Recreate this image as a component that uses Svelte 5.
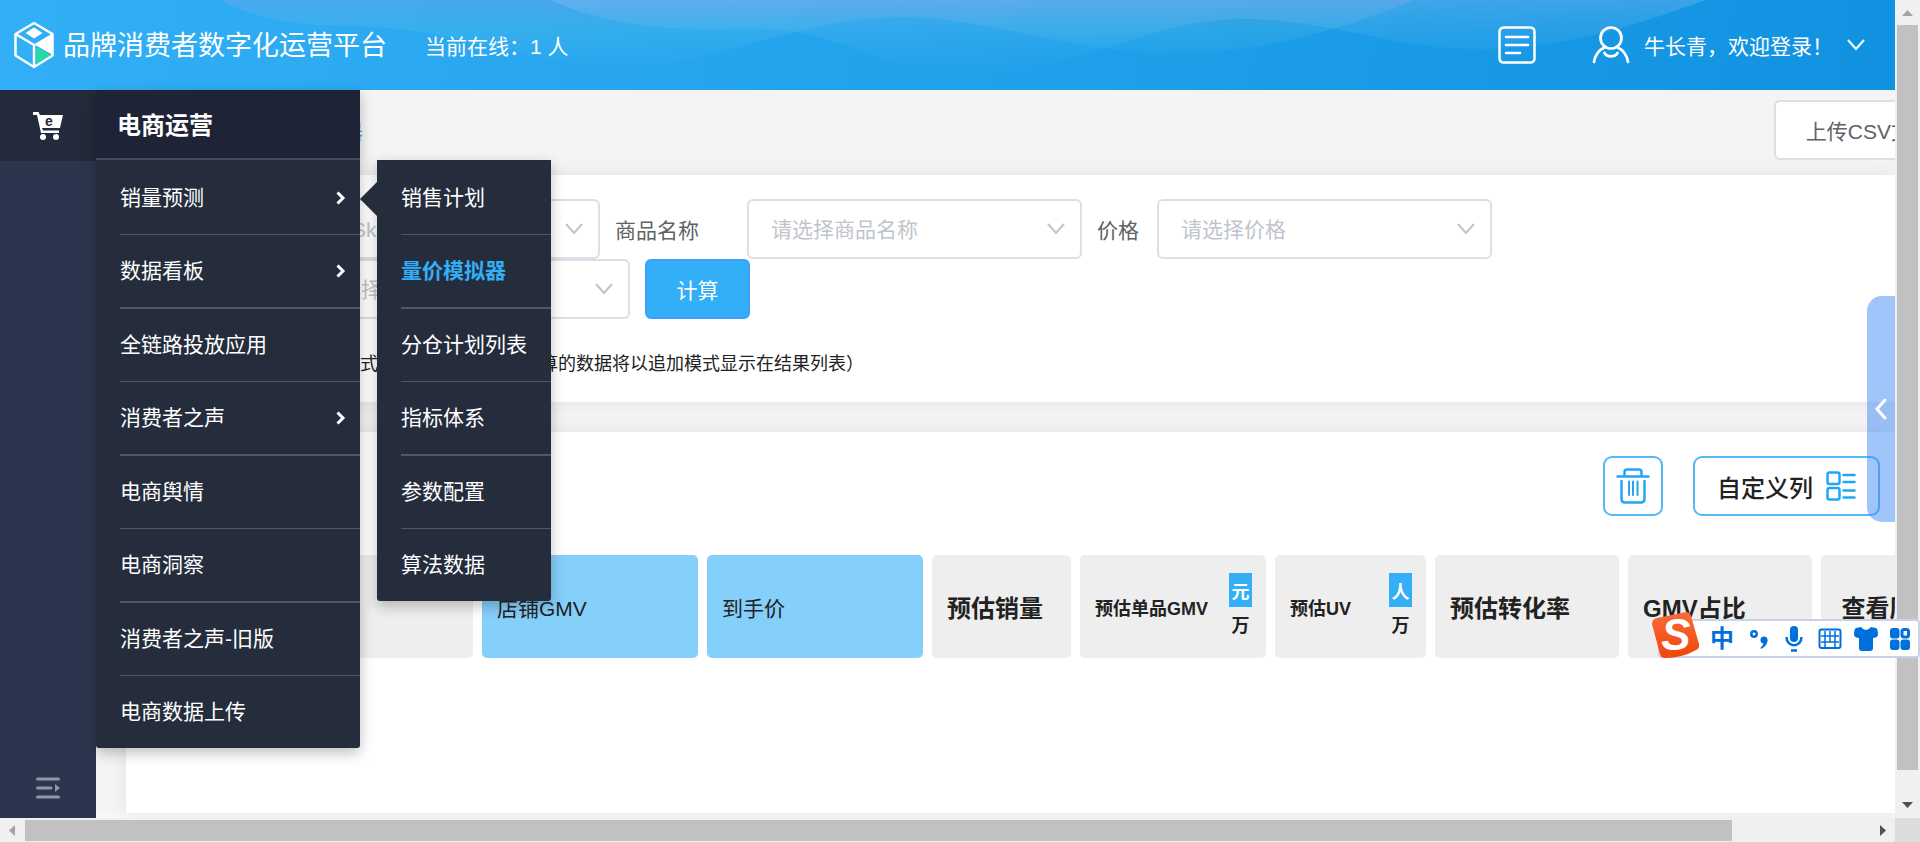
<div class="window">
  <div class="viewport">
    <!-- Header -->
    <header class="topbar">
      <svg class="waves" viewBox="0 0 1895 90" preserveAspectRatio="none" aria-hidden="true">
        <defs>
          <linearGradient id="wave" x1="0" y1="0" x2="0" y2="75" gradientUnits="userSpaceOnUse">
            <stop offset="0" stop-color="#c2a0dc" stop-opacity="0.2" />
            <stop offset="0.4" stop-color="#78d2dc" stop-opacity="0.16" />
            <stop offset="1" stop-color="#50c8ff" stop-opacity="0" />
          </linearGradient>
          <linearGradient id="wave-light" x1="0" y1="0" x2="0" y2="75" gradientUnits="userSpaceOnUse">
            <stop offset="0" stop-color="#a8c8f0" stop-opacity="0.26" />
            <stop offset="1" stop-color="#50c8ff" stop-opacity="0" />
          </linearGradient>
        </defs>
        <path fill="url(#wave)" d="M220 0C255 19 300 26 350 26C460 27 520 66 620 66C720 66 800 17 900 17C990 17 1070 53 1170 53C1270 52 1340 30 1415 0Z" />
        <path fill="url(#wave-light)" d="M550 0C590 18 640 29 700 29C750 29 775 27 800 33C860 46 900 73 970 73C1080 73 1150 19 1240 19C1330 19 1390 49 1480 49C1560 49 1630 28 1705 0Z" />
      </svg>
      <div class="brand">
        <svg width="42" height="48" viewBox="0 0 42 48" fill="none" aria-hidden="true">
          <path d="M21 2L39.500 13V34.500L21 46L2.500 34.500V13Z" stroke="#fff" stroke-width="2.500" stroke-linejoin="round" />
          <path d="M2.500 13L21 24V46" stroke="#fff" stroke-width="2.500" />
          <path d="M20 24L40 12V34L23 24.500Z" fill="#fff" />
          <path d="M21 6.500L29.500 12L21 17.500L12.500 12Z" fill="#fff" />
          <path d="M23 26L37.500 34L23 43.500Z" fill="#25dba6" />
        </svg>
        <h1>品牌消费者数字化运营平台</h1>
      </div>
      <span class="online">当前在线：1 人</span>
      <button class="icon-button" aria-label="消息">
        <svg width="38" height="38" viewBox="0 0 38 38" fill="none" stroke="#fff" stroke-width="2.500" stroke-linecap="round">
          <rect x="1.500" y="1.500" width="35" height="35" rx="4" />
          <path d="M8 11H30M8 19H30M8 27H22" />
        </svg>
      </button>
      <button class="user">
        <svg width="38" height="38" viewBox="0 0 38 38" fill="none" stroke="#fff" stroke-width="2.700" stroke-linecap="round">
          <circle cx="19" cy="12" r="10.500" />
          <path d="M2 36C3 29 7 24 13 21M36 36C35 29 31 24 25 21M12.500 27C15 31.500 23 31.500 25.500 27" />
        </svg>
        <span>牛长青，欢迎登录！</span>
        <svg width="18" height="12" viewBox="0 0 18 12" fill="none" stroke="#fff" stroke-width="2">
          <path d="M1 1L9 10L17 1" />
        </svg>
      </button>
    </header>

    <div class="body">
      <!-- Sidebar -->
      <aside class="sidebar">
        <button class="side-item" aria-label="电商运营">
          <svg width="30" height="30" viewBox="0 0 30 30" aria-hidden="true">
            <path d="M0 1H5.500L7 4H30L27 17H9L10 19.500H26V22H8L4 4H0Z" fill="#fff" />
            <circle cx="10" cy="26" r="3" fill="#fff" />
            <circle cx="23" cy="26" r="3" fill="#fff" />
            <text x="12" y="15" class="cart-letter">e</text>
          </svg>
        </button>
        <button class="collapse" aria-label="展开菜单">
          <svg width="24" height="24" viewBox="0 0 24 24" fill="none" stroke="#8e97a8" stroke-width="3" stroke-linecap="round">
            <path d="M1.500 3H22.500M1.500 12H15M1.500 21H22.500" />
            <path d="M19 8L24 12L19 16Z" fill="#8e97a8" stroke="none" />
          </svg>
        </button>
      </aside>

      <main class="main">
        <div class="crumb-row">
          <div class="crumbs">
            <span>销量预测</span>
            <span>/</span>
            <a href="#simulator">量价模拟器</a>
          </div>
          <button class="upload">上传CSV文件</button>
        </div>

        <!-- Filters -->
        <section class="card filters">
          <div class="filter-row">
            {#each filters as filter}
              {@render field(filter)}
            {/each}
          </div>
          <div class="filter-row">
            {@render field(activity)}
            <button class="submit">计算</button>
          </div>
          <label class="append">
            <input type="checkbox" bind:checked={append} />
            <span>启用计算结果追加模式（勾选后，每一次计算的数据将以追加模式显示在结果列表）</span>
          </label>
        </section>

        <!-- Result list -->
        <section class="card results">
          <div class="tools">
            <button class="tool trash" aria-label="删除">
              <svg width="34" height="36" viewBox="0 0 34 36" fill="none" stroke="#23a5f5" stroke-width="2.500" stroke-linecap="round" stroke-linejoin="round">
                <path d="M1.500 8.500H32.500M8.500 8V4Q8.500 1.500 11 1.500H23Q25.500 1.500 25.500 4V8M5.500 13V31Q5.500 34.500 9 34.500H25Q28.500 34.500 28.500 31V13" />
                <path d="M13 13.500V27M17 13.500V27M21.500 13.500V27" stroke-width="2" />
              </svg>
            </button>
            <button class="tool">
              <span>自定义列</span>
              <svg width="30" height="30" viewBox="0 0 30 30" fill="none" stroke="#23a5f5" stroke-width="2.500" stroke-linecap="round">
                <rect x="1.500" y="1.500" width="12" height="11.500" rx="2" />
                <rect x="1.500" y="17" width="12" height="11.500" rx="2" />
                <path d="M17.500 4H28.500M17.500 11H28.500M17.500 19.500H28.500M17.500 26.500H28.500" />
              </svg>
            </button>
          </div>
          <table class="result-table">
            <thead>
              <tr>
                {#each columns as col}
                  <th class={col.kind} style="width: {col.width}px">
                    <div class="cell">
                      <span>{col.title}</span>
                      {#if col.units}
                        <span class="units">
                          {#each col.units as unit, i}
                            <button class:on={i === 0}>{unit}</button>
                          {/each}
                        </span>
                      {/if}
                    </div>
                  </th>
                {/each}
              </tr>
            </thead>
          </table>
        </section>
      </main>
    </div>

    <!-- Flyout menu -->
    <nav class="flyout">
      <h2>电商运营</h2>
      <ul>
        {#each menu as item}
          <li>
            <a href="#menu">{item.name}</a>
            {#if item.children}
              <svg width="10" height="14" viewBox="0 0 10 14" fill="none" stroke="#fff" stroke-width="3">
                <path d="M1.500 1.500L7 7L1.500 12.500" />
              </svg>
            {/if}
          </li>
        {/each}
      </ul>
    </nav>
    <nav class="flyout submenu">
      <ul>
        {#each submenu as name}
          <li class:active={name === current}><a href="#submenu">{name}</a></li>
        {/each}
      </ul>
    </nav>

    <button class="drawer" aria-label="展开">
      <svg width="14" height="24" viewBox="0 0 14 24" fill="none" stroke="#fff" stroke-width="3" stroke-linecap="round">
        <path d="M11 3L3 12L11 21" />
      </svg>
    </button>
  </div>

  <!-- Scrollbars -->
  <div class="bar vertical">
    <i class="arrow up"></i>
    <div class="track"><div class="thumb" style="height: {scrollY}%"></div></div>
    <i class="arrow down"></i>
  </div>
  <div class="bar horizontal">
    <i class="arrow left"></i>
    <div class="track"><div class="thumb" style="width: {scrollX}%"></div></div>
    <i class="arrow right"></i>
  </div>
  <div class="corner"></div>

  <!-- Input method toolbar -->
  <div class="ime">
    <svg class="ime-logo" width="48" height="46" viewBox="0 0 48 46" aria-hidden="true">
      <defs>
        <linearGradient id="ime" x1="0" y1="0" x2="0" y2="1">
          <stop offset="0" stop-color="#fb6a3a" />
          <stop offset="1" stop-color="#ee4708" />
        </linearGradient>
      </defs>
      <path fill="url(#ime)" d="M5 6L34 0Q38 0 39 4L47 32Q48 36 44 38Q30 46 13 46Q9 46 8 42L0 12Q0 7 5 6Z" />
      <text x="24" y="38" class="ime-letter">S</text>
    </svg>
    <span class="lang">中</span>
    <svg width="24" height="24" viewBox="0 0 24 24" fill="#0070dc">
      <circle cx="8" cy="7" r="2.700" fill="none" stroke="#0070dc" stroke-width="2.500" />
      <circle cx="18" cy="13" r="3.500" />
      <path d="M21.500 13Q21.500 19 15 22L14.500 20.500Q17.500 18.500 17.500 15Z" />
    </svg>
    <svg width="24" height="26" viewBox="0 0 24 26" fill="none" stroke="#0070dc" stroke-width="2.500">
      <rect x="8" y="0" width="8" height="16" rx="4" fill="#0070dc" stroke="none" />
      <path d="M4.500 11C4.500 22 19.500 22 19.500 11M9 24.500H15" />
    </svg>
    <svg width="24" height="24" viewBox="0 0 24 24" fill="none" stroke="#0070dc" stroke-width="1.500">
      <rect x="1.500" y="2.500" width="21" height="18.500" rx="2" stroke-width="2" />
      <path d="M3 9H21M3 15H21M7 4V20M12 4V15M17 4V20" />
    </svg>
    <svg width="24" height="24" viewBox="0 0 24 24" fill="#0070dc">
      <path d="M7 0Q12 6 17 0L22 1Q24 2 24 8Q23 11 19 11V21Q19 24 16 24H8Q5 24 5 21V11Q1 11 0 8Q0 2 2 1Z" />
    </svg>
    <svg width="20" height="24" viewBox="0 0 20 24" fill="#0070dc">
      <rect x="0" y="1" width="9.500" height="10.500" rx="3" />
      <rect x="0" y="12.500" width="9.500" height="10.500" rx="3" />
      <rect x="10.500" y="12.500" width="9.500" height="10.500" rx="3" />
      <rect x="12" y="2.500" width="6.500" height="7.500" rx="2" fill="none" stroke="#0070dc" stroke-width="3" />
    </svg>
  </div>
</div>

{#snippet field(filter)}
  <label class={filter.size} for={filter.id}>{filter.label}</label>
  <div class="select">
    <select id={filter.id}>
      <option value="">{filter.placeholder}</option>
    </select>
    <svg width="18" height="12" viewBox="0 0 18 12" fill="none" stroke="#c0c4cc" stroke-width="2">
      <path d="M1 1L9 10L17 1" />
    </svg>
  </div>
{/snippet}

<script lang="ts">
// Whether new results are appended to the list.
let append = $state(false);
// The open page in the submenu.
let current = $state('量价模拟器');

// Share of the page that is visible, in percent.
const scrollX = 93;
const scrollY = 97;

const menu = [
  { name: '销量预测', children: true },
  { name: '数据看板', children: true },
  { name: '全链路投放应用' },
  { name: '消费者之声', children: true },
  { name: '电商舆情' },
  { name: '电商洞察' },
  { name: '消费者之声-旧版' },
  { name: '电商数据上传' },
];

const submenu = ['销售计划', '量价模拟器', '分仓计划列表', '指标体系', '参数配置', '算法数据'];

const filters = [
  { id: 'sku', label: 'Sku', placeholder: '请选择Sku', size: 'medium' },
  { id: 'goods', label: '商品名称', placeholder: '请选择商品名称', size: 'large' },
  { id: 'price', label: '价格', placeholder: '请选择价格', size: 'small' },
];
const activity = { id: 'activity', label: '活动类型', placeholder: '请选择', size: 'xlarge' };

const columns = [
  { title: '商品名称', width: 317, kind: 'strong' },
  { title: '店铺GMV', width: 216, kind: 'input' },
  { title: '到手价', width: 216, kind: 'input' },
  { title: '预估销量', width: 139, kind: 'strong' },
  { title: '预估单品GMV', width: 186, kind: 'unit', units: ['元', '万'] },
  { title: '预估UV', width: 151, kind: 'unit', units: ['人', '万'] },
  { title: '预估转化率', width: 184, kind: 'strong' },
  { title: 'GMV占比', width: 184, kind: 'strong' },
  { title: '查看历史趋势', width: 184, kind: 'action' },
];
</script>

<style>
:global(body) {
  margin: 0;
}

.window {
  position: relative;
  display: grid;
  grid-template-columns: minmax(0, 1fr) 25px;
  grid-template-rows: minmax(0, 1fr) 24px;
  height: 100vh;
  overflow: hidden;
  font-family: "Liberation Sans", "Noto Sans CJK SC", sans-serif;
  font-size: 21px;
  color: #222;
}

.window * {
  box-sizing: border-box;
}

button,
select {
  font: inherit;
  color: inherit;
  margin: 0;
  padding: 0;
  border: none;
  background: none;
  cursor: pointer;
}

svg {
  display: block;
  flex: none;
}

a {
  color: inherit;
  text-decoration: none;
}

.viewport {
  position: relative;
  display: flex;
  flex-direction: column;
  overflow: hidden;
  background: #f4f4f4;
}

/* Header */
.topbar {
  position: relative;
  display: flex;
  align-items: center;
  flex: none;
  height: 90px;
  padding: 0 30px 0 13px;
  color: #fff;
  background: linear-gradient(100deg, #32aff6, #1e9fe9 60%, #1192e1);
}

.waves {
  position: absolute;
  inset: 0;
  width: 100%;
  height: 100%;
}

.topbar > :not(.waves) {
  position: relative;
}

.brand {
  display: flex;
  align-items: center;
  gap: 8px;
}

h1 {
  margin: 0;
  padding-top: 2px;
  font-size: 27px;
  font-weight: 400;
  line-height: 40px;
}

.online {
  flex: 1;
  margin-left: 38px;
}

.icon-button {
  margin-right: 56px;
}

.user {
  display: flex;
  align-items: center;
  gap: 14px;
}

/* Sidebar */
.body {
  display: flex;
  flex: 1;
  min-height: 0;
}

.sidebar {
  display: flex;
  flex-direction: column;
  justify-content: space-between;
  flex: none;
  width: 96px;
  background: #2b364e;
}

.side-item,
.collapse {
  display: flex;
  align-items: center;
  justify-content: center;
}

.side-item {
  height: 71px;
  background: #222a3b;
}

.collapse {
  height: 60px;
}

.cart-letter {
  font-size: 14px;
  font-weight: 700;
  fill: #222a3b;
}

/* Content */
.main {
  display: flex;
  flex-direction: column;
  flex: 1;
  min-width: 0;
  padding: 10px 0 0 30px;
  border-bottom: 5px solid #f3f8fc;
}

.crumb-row {
  display: flex;
  align-items: center;
  justify-content: space-between;
  width: calc(100% + 70px);
  margin-bottom: 15px;
}

.crumbs {
  display: flex;
  gap: 21px;
}

.crumbs a {
  color: #32aff6;
}

.upload {
  height: 60px;
  padding: 0 30px;
  color: #606266;
  background: #fff;
  border: 2px solid #dcdfe6;
  border-radius: 6px;
}

.card {
  background: #fff;
  box-shadow: 0 0 18px rgba(0, 0, 0, 0.07);
}

.filters {
  flex: none;
  margin-bottom: 30px;
  padding: 24px 30px;
}

.filter-row {
  display: flex;
  align-items: center;
}

.filter-row label {
  color: #606266;
}

.small {
  width: 60px;
}

.medium {
  width: 109px;
}

.large {
  width: 132px;
}

.xlarge {
  width: 139px;
}

.select {
  position: relative;
  width: 335px;
  margin-right: 15px;
}

.select select {
  appearance: none;
  width: 100%;
  height: 60px;
  padding: 0 45px 0 22px;
  color: #c0c4cc;
  background: #fff;
  border: 2px solid #dcdfe6;
  border-radius: 6px;
}

.select svg {
  position: absolute;
  top: 24px;
  right: 17px;
  pointer-events: none;
}

.submit {
  width: 105px;
  height: 60px;
  color: #fff;
  background: #32aff6;
  border: 2px solid #409eff;
  border-radius: 6px;
}

.append {
  display: flex;
  align-items: center;
  gap: 21px;
  margin-top: 31px;
  font-size: 18px;
  line-height: 28px;
}

.append input {
  width: 21px;
  height: 21px;
  margin: 0;
}

.results {
  flex: 1;
  min-height: 0;
  padding: 24px 15px 0 30px;
}

.tools {
  display: flex;
  justify-content: flex-end;
  gap: 30px;
  margin-bottom: 39px;
}

.tool {
  display: flex;
  align-items: center;
  justify-content: center;
  gap: 13px;
  height: 60px;
  padding: 0 22px;
  font-size: 24px;
  font-weight: 500;
  border: 2px solid #55b9f7;
  border-radius: 9px;
}

.trash {
  width: 60px;
  padding: 0;
}

.result-table {
  width: max-content;
  margin-left: -9px;
  border-collapse: separate;
  border-spacing: 9px 0;
}

th {
  height: 103px;
  padding: 0 14px 0 15px;
  font-weight: 700;
  text-align: left;
  white-space: nowrap;
  background: #eee;
  border-radius: 5px;
}

.strong,
.action {
  font-size: 24px;
}

.input {
  font-weight: 400;
  background: #85cffb;
}

.unit {
  font-size: 18px;
}

.cell {
  display: flex;
  align-items: center;
  justify-content: space-between;
}

.action .cell {
  justify-content: center;
}

.units {
  display: flex;
  flex-direction: column;
}

.units button {
  width: 23px;
  height: 34px;
}

.units .on {
  color: #fff;
  background: #32aff6;
}

/* Flyout menu */
.flyout {
  position: absolute;
  top: 90px;
  left: 96px;
  width: 264px;
  color: #fff;
  background: #252d3d;
  border-radius: 0 0 3px 3px;
  box-shadow: 0 5px 14px rgba(0, 0, 0, 0.25);
}

.flyout h2 {
  height: 70px;
  margin: 0;
  padding: 0 21px;
  font-size: 24px;
  line-height: 72px;
  background: #1e2436;
  border-bottom: 2px solid #454b57;
}

.flyout ul {
  margin: 0;
  padding: 2px 0 0 24px;
  list-style: none;
}

.flyout li {
  display: flex;
  align-items: center;
  justify-content: space-between;
  padding-right: 14px;
  line-height: 72px;
  border-bottom: 1px solid #505863;
}

.flyout li:nth-child(even) {
  border-bottom-width: 2px;
}

.flyout li:last-child {
  border-bottom: none;
}

.submenu {
  top: 160px;
  left: 377px;
  width: 174px;
}

.submenu::before {
  content: "";
  position: absolute;
  top: 22px;
  right: 100%;
  border: solid transparent;
  border-width: 17px 17px 17px 0;
  border-right-color: #252d3d;
}

.submenu li {
  padding-right: 0;
}

.active {
  font-weight: 700;
  color: #32aff6;
}

.drawer {
  position: absolute;
  top: 296px;
  right: 0;
  display: flex;
  align-items: center;
  justify-content: center;
  width: 28px;
  height: 226px;
  background: rgba(64, 138, 243, 0.5);
  border-radius: 15px 0 0 15px;
}

/* Scrollbars */
.bar {
  display: flex;
  background: #f0f0f0;
}

.vertical {
  flex-direction: column;
  padding: 0 2px;
}

.horizontal {
  padding: 2px 0 1px;
}

.track {
  flex: 1;
}

.thumb {
  height: 100%;
  background: #c1c1c1;
}

.arrow {
  flex: none;
  width: 25px;
  height: 21px;
  background: #a3a3a3;
}

.vertical .arrow {
  width: 21px;
  height: 25px;
}

.up {
  clip-path: polygon(5px 16px, 16px 16px, 50% 10px);
}

.down {
  background: #505050;
  clip-path: polygon(5px 9px, 16px 9px, 50% 15px);
}

.left {
  clip-path: polygon(15px 5px, 15px 16px, 9px 50%);
}

.right {
  background: #505050;
  clip-path: polygon(10px 5px, 10px 16px, 16px 50%);
}

.horizontal .track {
  padding-right: 10px;
}

.corner {
  background: #dcdcdc;
}

/* Input method toolbar */
.ime {
  position: absolute;
  right: 0;
  bottom: 184px;
  display: flex;
  align-items: center;
  gap: 12px;
  height: 39px;
  padding: 0 8px 0 50px;
  background: #fff;
  border: 2px solid #c8d4e6;
  border-radius: 4px;
}

.ime-logo {
  position: absolute;
  bottom: -2px;
  left: -8px;
}

.ime-letter {
  font-size: 44px;
  font-style: italic;
  font-weight: 700;
  text-anchor: middle;
  fill: #fff;
}

.lang {
  width: 24px;
  font-size: 24px;
  font-weight: 700;
  line-height: 34px;
  color: #0070dc;
}
</style>
